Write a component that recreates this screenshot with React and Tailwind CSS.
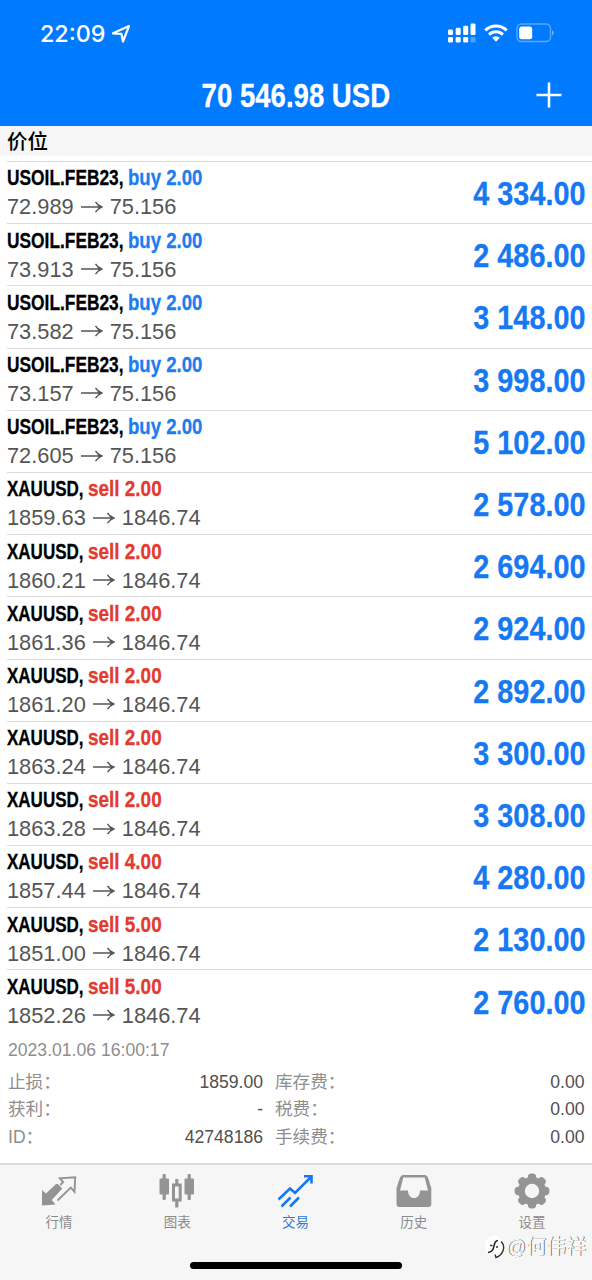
import React from "react";

const positions = [
  { symbol: "USOIL.FEB23,", side: "buy", volume: "2.00", open: "72.989", current: "75.156", profit: "4 334.00" },
  { symbol: "USOIL.FEB23,", side: "buy", volume: "2.00", open: "73.913", current: "75.156", profit: "2 486.00" },
  { symbol: "USOIL.FEB23,", side: "buy", volume: "2.00", open: "73.582", current: "75.156", profit: "3 148.00" },
  { symbol: "USOIL.FEB23,", side: "buy", volume: "2.00", open: "73.157", current: "75.156", profit: "3 998.00" },
  { symbol: "USOIL.FEB23,", side: "buy", volume: "2.00", open: "72.605", current: "75.156", profit: "5 102.00" },
  { symbol: "XAUUSD,", side: "sell", volume: "2.00", open: "1859.63", current: "1846.74", profit: "2 578.00" },
  { symbol: "XAUUSD,", side: "sell", volume: "2.00", open: "1860.21", current: "1846.74", profit: "2 694.00" },
  { symbol: "XAUUSD,", side: "sell", volume: "2.00", open: "1861.36", current: "1846.74", profit: "2 924.00" },
  { symbol: "XAUUSD,", side: "sell", volume: "2.00", open: "1861.20", current: "1846.74", profit: "2 892.00" },
  { symbol: "XAUUSD,", side: "sell", volume: "2.00", open: "1863.24", current: "1846.74", profit: "3 300.00" },
  { symbol: "XAUUSD,", side: "sell", volume: "2.00", open: "1863.28", current: "1846.74", profit: "3 308.00" },
  { symbol: "XAUUSD,", side: "sell", volume: "4.00", open: "1857.44", current: "1846.74", profit: "4 280.00" },
  { symbol: "XAUUSD,", side: "sell", volume: "5.00", open: "1851.00", current: "1846.74", profit: "2 130.00" },
  { symbol: "XAUUSD,", side: "sell", volume: "5.00", open: "1852.26", current: "1846.74", profit: "2 760.00" },
];

const StatusBar = () => (
  <div className="h-[67px] flex items-center justify-between pl-[40px] pr-[37px]">
    <div className="flex items-center gap-[5px]">
      <span className="w-[66px] whitespace-nowrap font-['Inter',sans-serif] text-[23.3px] leading-[28px] font-medium">
        22:09
      </span>
      <svg width="20" height="20" viewBox="0 0 20 20" fill="none" stroke="white" strokeWidth="2.2" strokeLinejoin="round">
        <path d="M18 2 L2 9.3 L10.4 9.8 L12 17.5 Z" />
      </svg>
    </div>

    <div className="flex items-center pb-[2px]">
      {/* Dual SIM signal */}
      <svg width="28" height="20" viewBox="0 0 28 20" fill="white">
        <rect x="0" y="6.5" width="5" height="5.5" rx="1.3" />
        <rect x="7.7" y="4.8" width="5" height="7.2" rx="1.3" />
        <rect x="15.2" y="2.8" width="5" height="9.2" rx="1.3" />
        <rect x="22.5" y="0.5" width="5" height="11.5" rx="1.3" />
        <rect x="0" y="14" width="5" height="5.5" rx="1.3" />
        <rect x="7.7" y="14" width="5" height="5.5" rx="1.3" />
        <rect x="15.2" y="14" width="5" height="5.5" rx="1.3" />
        <rect x="22.5" y="14" width="5" height="5.5" rx="1.3" opacity="0.3" />
      </svg>
      {/* Wi-Fi */}
      <svg className="ml-[8px]" width="24" height="18" viewBox="0 0 24 18" fill="none" stroke="white" strokeWidth="3">
        <path d="M1.3 6.4 A15 15 0 0 1 22.7 6.4" />
        <path d="M5.1 10.6 A9.7 9.7 0 0 1 18.9 10.6" />
        <path d="M8.2 13.8 A5.2 5.2 0 0 1 15.8 13.8 L12 17.8 Z" fill="white" stroke="none" />
      </svg>
      {/* Battery */}
      <svg className="ml-[8px]" width="39" height="20" viewBox="0 0 39 20">
        <rect x="1" y="1" width="33.5" height="17.5" rx="4.5" fill="none" stroke="white" strokeOpacity="0.35" strokeWidth="1.4" />
        <rect x="3.2" y="3.4" width="13" height="12.8" rx="2.5" fill="white" />
        <path d="M36 7 Q39.4 9.8 36 12.8 Z" fill="white" opacity="0.45" />
      </svg>
    </div>
  </div>
);

const Header = () => (
  <header className="h-[126px] bg-[#007aff] text-white">
    <StatusBar />
    <div className="h-[58px] grid grid-cols-[1fr_auto_1fr] items-center">
      <span />
      <h1 className="text-[33px] leading-[36px] font-bold scale-x-[0.835] whitespace-nowrap [-webkit-text-stroke:0.3px_white]">
        70 546.98 USD
      </h1>
      <svg className="justify-self-end mr-[29px] -mt-[2px]" width="28" height="28" viewBox="0 0 28 28" stroke="white" strokeWidth="2.6">
        <path d="M14 1.5 V26.5 M1.5 14 H26.5" />
      </svg>
    </div>
  </header>
);

const Position = ({ symbol, side, volume, open, current, profit }) => {
  const isBuy = side === "buy";

  return (
    <li className="h-[62.2px] ml-[7px] pr-[7px] border-t border-[#dcdcdc] flex justify-between">
      <div className="pt-[3.4px]">
        <div className="flex text-[22px] leading-[26px] font-bold whitespace-nowrap [-webkit-text-stroke:0.3px_currentColor]">
          <span className={isBuy ? "w-[120.5px] text-black" : "w-[81px] text-black"}>
            <span className={isBuy ? "inline-block origin-left scale-x-[0.788]" : "inline-block origin-left scale-x-[0.773]"}>
              {symbol}
            </span>
          </span>
          <span className={isBuy ? "origin-left scale-x-[0.845] text-[#1c7cf0]" : "origin-left scale-x-[0.86] text-[#e23b30]"}>
            {side} {volume}
          </span>
        </div>
        <div className="mt-[2px] flex items-center text-[21.8px] leading-[28px] text-[#555]">
          <span>{open}</span>
          <svg className="mx-[7px] -mt-px" width="22" height="12" viewBox="0 0 22 12" fill="none" stroke="#555" strokeWidth="1.4">
            <path d="M0 6 H20.5 M14.5 0.8 Q16.5 4.5 20.8 6 Q16.5 7.5 14.5 11.2" />
          </svg>
          <span>{current}</span>
        </div>
      </div>
      <span className="self-center origin-right scale-x-[0.873] text-[33px] leading-[36px] font-bold text-[#1678f2] pt-[3px] [-webkit-text-stroke:0.3px_currentColor]">
        {profit}
      </span>
    </li>
  );
};

const Details = () => (
  <div className="px-[8px] text-[17.6px] text-[#8e8e8e]">
    <p className="h-[37px] leading-[37px]">2023.01.06 16:00:17</p>
    <dl className="grid grid-cols-[255px_309.5px] gap-x-[12px] leading-[27.6px]">
      <Detail label="止损：" value="1859.00" />
      <Detail label="库存费：" value="0.00" />
      <Detail label="获利：" value="-" />
      <Detail label="税费：" value="0.00" />
      <Detail label="ID：" value="42748186" />
      <Detail label="手续费：" value="0.00" />
    </dl>
  </div>
);

const Detail = ({ label, value }) => (
  <div className="h-[27.6px] flex justify-between">
    <dt>{label}</dt>
    <dd className="text-[#505050]">{value}</dd>
  </div>
);

const QuotesIcon = () => (
  <svg width="36" height="34" viewBox="0 0 36 34">
    <path d="M1 16 L5 19.6 L14.5 10.4 Q16 9.2 17.3 10.4 L21.3 14.6 L10.8 26 L14.5 30.6 L1 31.5 Z" fill="#949494" />
    <path
      d="M16.5 26.5 L29.8 13.6 L33.5 17.8 L34.2 3.2 L18.8 4.2 L22.2 8 L19.3 11"
      fill="none"
      stroke="#949494"
      strokeWidth="1.9"
    />
  </svg>
);

const ChartIcon = () => (
  <svg width="36" height="34" viewBox="0 0 36 34" fill="#949494">
    <rect x="3.6" y="0" width="3.2" height="26" rx="1" />
    <rect x="0.5" y="4.5" width="9.5" height="16" rx="1" />
    <rect x="28.6" y="0" width="3.2" height="26" rx="1" />
    <rect x="25.5" y="4.5" width="9.5" height="16" rx="1" />
    <path d="M16.2 5 H19.4 V9.5 H22.7 V27.5 H19.4 V33.5 H16.2 V27.5 H13 V9.5 H16.2 Z M16 12.5 V24.5 H19.7 V12.5 Z" fillRule="evenodd" />
  </svg>
);

const TradeIcon = () => (
  <svg width="36" height="34" viewBox="0 0 36 34" fill="none" stroke="#1678f2" strokeWidth="2.6">
    <path d="M1.5 25.5 L13 14.5 L18 19 L34 3" />
    <path d="M27 2.3 H34.5 V9.5" />
    <path d="M4.5 32.5 L13.5 23.5 M13 32.5 L22 23.5" />
  </svg>
);

const HistoryIcon = () => (
  <svg width="36" height="34" viewBox="0 0 36 34">
    <path
      d="M7 1 H29 Q31 1 32 3.5 L35.3 14 V30 Q35.3 33 32.3 33 H3.5 Q0.5 33 0.5 30 V14 L4 3.5 Q5 1 7 1 Z M7.3 3.4 L4 16.5 H12 C12 26.5 24 26.5 24 16.5 H32 L28.7 3.4 Z"
      fill="#949494"
      fillRule="evenodd"
    />
  </svg>
);

const SettingsIcon = () => (
  <svg width="36" height="36" viewBox="-18 -18 36 36">
    <g fill="#949494">
      <circle r="14" />
      {[0, 45, 90, 135, 180, 225, 270, 315].map((angle) => (
        <rect key={angle} x="-4.2" y="-17.4" width="8.4" height="9" rx="3.6" transform={`rotate(${angle})`} />
      ))}
    </g>
    <circle r="7.2" fill="#f6f6f6" />
  </svg>
);

const tabs = [
  { label: "行情", icon: QuotesIcon },
  { label: "图表", icon: ChartIcon },
  { label: "交易", icon: TradeIcon, active: true },
  { label: "历史", icon: HistoryIcon },
  { label: "设置", icon: SettingsIcon },
];

const TabBar = () => (
  <nav className="h-[117px] border-t-2 border-[#dadada] bg-[#f6f6f6] flex flex-col justify-between">
    <div className="grid grid-cols-5 pt-[8px] pr-[1px]">
      {tabs.map(({ label, icon: Icon, active }) => (
        <button key={label} className="flex flex-col items-center">
          <span className="h-[36px] flex items-center">
            <Icon />
          </span>
          <span className={`mt-[4px] text-[13.5px] leading-[20px] ${active ? "text-[#2f7bd8]" : "text-[#8c8c8c]"}`}>
            {label}
          </span>
        </button>
      ))}
    </div>
    <div className="mx-auto mb-[11px] h-[7px] w-[212px] rounded-full bg-black" />
  </nav>
);

const Watermark = () => (
  <div className="absolute right-[6px] bottom-[19px] flex items-center text-[20px] leading-[28px]">
    <svg className="mt-[3px] -mr-px" width="22" height="26" viewBox="0 0 22 26" fill="none">
      <ellipse cx="9" cy="11" rx="9" ry="10.5" fill="white" />
      <path d="M13 5.5 C10 5.5 9.5 8 9 11 C8.5 14.5 7.5 17 3 17.5" stroke="#222" strokeWidth="1.6" />
      <path d="M5 10.5 H7.5 M11 12 H13 M16 6.5 C21 11 18.5 20 11 22.5 L10 19.5" stroke="#333" strokeWidth="1.4" />
    </svg>
    <span className="text-[#fafafa] [text-shadow:0.8px_0.4px_0.6px_#555]">@何伟祥</span>
  </div>
);

const App = () => {
  return (
    <div className="relative w-[592px] h-[1280px] overflow-hidden flex flex-col bg-white font-['Liberation_Sans','Noto_Sans_CJK_SC',sans-serif]">
      <Header />

      <h2 className="h-[30px] mb-[5px] pl-[7px] bg-[#f6f6f6] text-[20.5px] leading-[32px] font-medium text-black">价位</h2>

      <ul>
        {positions.map((position, index) => (
          <Position key={index} {...position} />
        ))}
      </ul>

      <Details />

      <div className="mt-auto">
        <TabBar />
      </div>

      <Watermark />
    </div>
  );
};

export default App;
